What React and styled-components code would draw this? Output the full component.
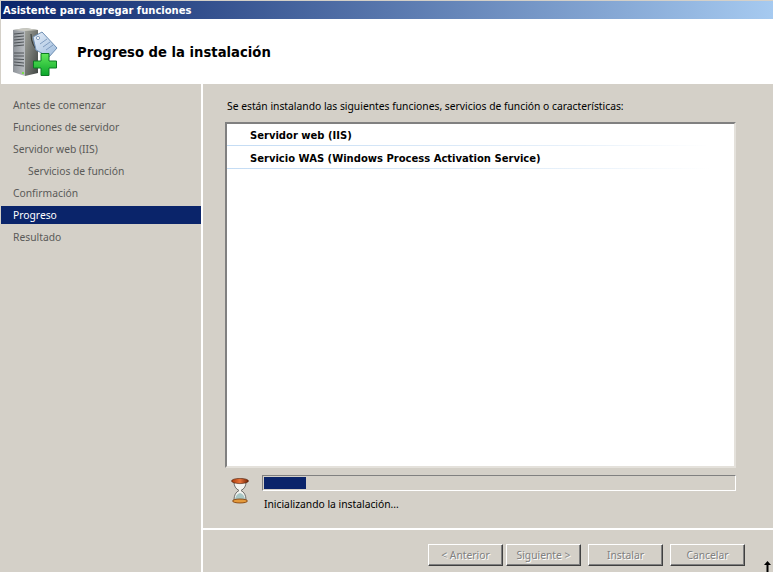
import styled, { createGlobalStyle } from 'styled-components';

const GlobalStyle = createGlobalStyle`
    html, body {
        margin: 0;
        padding: 0;
        background-color: #D4D0C8;
    }
`;

const Window = styled.div`
    position: relative;
    width: 773px;
    height: 572px;
    overflow: hidden;
    display: flex;
    flex-direction: column;
    background-color: #D4D0C8;
    font-family: "Noto Sans", "DejaVu Sans", sans-serif;
    font-size: 10.3px;
    color: #000;
`;

const TitleBar = styled.div`
    height: 18px;
    margin: 1px 0 0 1px;
    padding-left: 2px;
    display: flex;
    align-items: center;
    background: linear-gradient(to right, #0A246A, #A6CAF0);
    color: #fff;
    font-family: "DejaVu Sans", sans-serif;
    font-weight: bold;
    font-size: 10px;
`;

const Header = styled.div`
    height: 65px;
    margin-left: 1px;
    display: flex;
    align-items: center;
    gap: 19px;
    padding-left: 11px;
    background-color: #fff;
`;

const HeaderTitle = styled.h1`
    margin: 2px 0 0;
    font-family: "DejaVu Sans", sans-serif;
    font-size: 13.2px;
    font-weight: bold;
    color: #000;
`;

const Body = styled.div`
    flex: 1;
    display: flex;
    min-height: 0;
`;

const Sidebar = styled.nav`
    width: 200px;
    margin-left: 1px;
    padding-top: 12px;
    display: flex;
    flex-direction: column;
    gap: 4px;
    flex-shrink: 0;
`;

const Step = styled.div`
    height: 18px;
    line-height: 18px;
    padding-left: ${p => (p.$sub ? 27 : 12)}px;
    color: ${p => (p.$active ? '#fff' : '#5a5a58')};
    background-color: ${p => (p.$active ? '#0A246A' : 'transparent')};
`;

const Main = styled.div`
    flex: 1;
    border-left: 2px solid #fff;
    display: flex;
    flex-direction: column;
`;

const Content = styled.div`
    height: 444px;
    padding: 15px 37px 0 22px;
    box-sizing: border-box;
    display: flex;
    flex-direction: column;
`;

const Intro = styled.p`
    margin: 0 0 9px 2px;
    height: 14px;
    line-height: 14px;
`;

const ListBox = styled.div`
    height: 346px;
    box-sizing: border-box;
    background-color: #fff;
    border: 2px solid;
    border-color: #808080 #E4E1DB #E4E1DB #808080;
`;

const ListRow = styled.div`
    height: 23px;
    box-sizing: border-box;
    padding-left: 23px;
    line-height: 25px;
    font-family: "DejaVu Sans", sans-serif;
    font-weight: bold;
    font-size: 10px;
    border-bottom: 1px solid transparent;
    border-image: linear-gradient(to right, #C4DCF4, #E8F1FA 70%, #fff 95%) 1;

    &:first-child {
        margin-top: -1px;
    }
`;

const ProgressArea = styled.div`
    margin-top: 7px;
    display: flex;
    gap: 11px;
`;

const IconSlot = styled.div`
    width: 26px;
    padding: 3px 0 0 5px;
    box-sizing: border-box;
    flex-shrink: 0;
`;

const ProgressColumn = styled.div`
    flex: 1;
    display: flex;
    flex-direction: column;
`;

const ProgressTrack = styled.div`
    height: 16px;
    box-sizing: border-box;
    padding: 1px;
    border: 1px solid;
    border-color: #808080 #fff #fff #808080;
`;

const ProgressFill = styled.div`
    height: 100%;
    background-color: #0A246A;
`;

const Status = styled.div`
    margin: 6px 0 0 2px;
    height: 14px;
    line-height: 14px;
`;

const Footer = styled.div`
    flex: 1;
    border-top: 2px solid #fff;
    padding: 14px 28px 0 0;
    display: flex;
    justify-content: flex-end;
    align-items: flex-start;
`;

const Button = styled.button`
    width: 75px;
    height: 22px;
    margin-left: ${p => p.$gap}px;
    padding: 0;
    box-sizing: border-box;
    background-color: #D4D0C8;
    font-family: inherit;
    font-size: 10.3px;
    color: #808080;
    text-shadow: 1px 1px 0 #fff;
    border: 1px solid;
    border-color: #fff #404040 #404040 #fff;
    box-shadow: inset -1px -1px 0 #808080;
`;

const Pointer = styled.svg`
    position: absolute;
    left: 762px;
    top: 561px;
`;

const ServerIcon = () => (
    <svg width="46" height="50" viewBox="0 0 46 50">
        <defs>
            <linearGradient id="srvFront" x1="0" x2="1" y1="0" y2="0">
                <stop offset="0" stopColor="#8d9298" />
                <stop offset="1" stopColor="#b9bdc1" />
            </linearGradient>
            <linearGradient id="srvSide" x1="0" x2="1" y1="0" y2="1">
                <stop offset="0" stopColor="#a3a59e" />
                <stop offset="1" stopColor="#3f4442" />
            </linearGradient>
            <linearGradient id="tag" x1="0" x2="1" y1="0" y2="1">
                <stop offset="0" stopColor="#e6eef8" />
                <stop offset="1" stopColor="#9dbbdc" />
            </linearGradient>
            <linearGradient id="plus" x1="0" x2="0" y1="0" y2="1">
                <stop offset="0" stopColor="#62e85a" />
                <stop offset="1" stopColor="#0aa62a" />
            </linearGradient>
        </defs>
        <path d="M1 3 L13 1 L13 49 L1 45 Z" fill="url(#srvFront)" />
        <path d="M13 1 L26 3 L26 46 L13 49 Z" fill="url(#srvSide)" />
        <path d="M1 3 L13 1 L26 3 L13 4 Z" fill="#c9c9c1" />
        <path d="M2 7 L12 6 M2 10 L12 9 M2 13 L12 12 M2 16 L12 15 M2 19 L12 18 M2 26 L12 26 M2 29 L12 29 M2 32 L12 32.5 M2 35 L12 36 M2 38 L12 39" stroke="#4e5357" strokeWidth="1" />
        <rect x="10" y="45" width="2" height="2" fill="#7be04a" />
        <path d="M19 7 Q19 18 26 24" fill="none" stroke="#2f3433" strokeWidth="1" />
        <path d="M21 10 L30 5 L45 21 L37 30 L24 23 Z" fill="url(#tag)" stroke="#6f8fb3" strokeWidth="1" />
        <circle cx="26" cy="11" r="1.6" fill="#fff" stroke="#5d7ea3" strokeWidth="0.7" />
        <path d="M28 17 L35 12 M31 20 L38 15 M34 23 L41 18" stroke="#7f9cc0" strokeWidth="1" />
        <path d="M29 34 V26.5 H37 V34 H44.5 V41 H37 V48.5 H29 V41 H21.5 V34 Z" fill="url(#plus)" stroke="#0b7a22" strokeWidth="1" />
    </svg>
);

const HourglassIcon = () => (
    <svg width="20" height="26" viewBox="0 0 20 26">
        <defs>
            <linearGradient id="cap" x1="0" x2="1" y1="0" y2="0">
                <stop offset="0" stopColor="#a83a08" />
                <stop offset="0.5" stopColor="#e8733a" />
                <stop offset="1" stopColor="#6e2204" />
            </linearGradient>
        </defs>
        <path d="M4 4 Q4 10 9 12.5 Q4 15 4 22 H16 Q16 15 11 12.5 Q16 10 16 4 Z" fill="#f4f4f0" stroke="#6d6d6a" strokeWidth="1" />
        <path d="M5 21 Q6 16 10 15 Q14 16 15 21 Z" fill="#a9c6c4" />
        <ellipse cx="10" cy="3" rx="8.5" ry="2.6" fill="url(#cap)" stroke="#4f1903" strokeWidth="0.6" />
        <ellipse cx="10" cy="23" rx="7.5" ry="2" fill="#e49a3c" stroke="#7a3a08" strokeWidth="0.8" />
    </svg>
);

const steps = [
    { label: 'Antes de comenzar' },
    { label: 'Funciones de servidor' },
    { label: 'Servidor web (IIS)' },
    { label: 'Servicios de función', sub: true },
    { label: 'Confirmación' },
    { label: 'Progreso', active: true },
    { label: 'Resultado' },
];

const App = () => {
    return (
    <Window>
        <GlobalStyle />
        <TitleBar>Asistente para agregar funciones</TitleBar>
        <Header>
            <ServerIcon />
            <HeaderTitle>Progreso de la instalación</HeaderTitle>
        </Header>
        <Body>
            <Sidebar>
                {steps.map(step => (
                    <Step key={step.label} $sub={step.sub} $active={step.active}>{step.label}</Step>
                ))}
            </Sidebar>
            <Main>
                <Content>
                    <Intro>Se están instalando las siguientes funciones, servicios de función o características:</Intro>
                    <ListBox>
                        <ListRow>Servidor web (IIS)</ListRow>
                        <ListRow>Servicio WAS (Windows Process Activation Service)</ListRow>
                    </ListBox>
                    <ProgressArea>
                        <IconSlot><HourglassIcon /></IconSlot>
                        <ProgressColumn>
                            <ProgressTrack>
                                <ProgressFill style={{ width: '9%' }} />
                            </ProgressTrack>
                            <Status>Inicializando la instalación...</Status>
                        </ProgressColumn>
                    </ProgressArea>
                </Content>
                <Footer>
                    <Button disabled>&lt; Anterior</Button>
                    <Button disabled $gap={3}>Siguiente &gt;</Button>
                    <Button disabled $gap={7}>Instalar</Button>
                    <Button disabled $gap={7}>Cancelar</Button>
                </Footer>
            </Main>
        </Body>
        <Pointer width="11" height="11" viewBox="0 0 11 11">
            <path d="M5.5 0 L9 4 H6.5 V11 H4.5 V4 H2 Z" fill="#000" />
        </Pointer>
    </Window>
    );
};

export default App;
